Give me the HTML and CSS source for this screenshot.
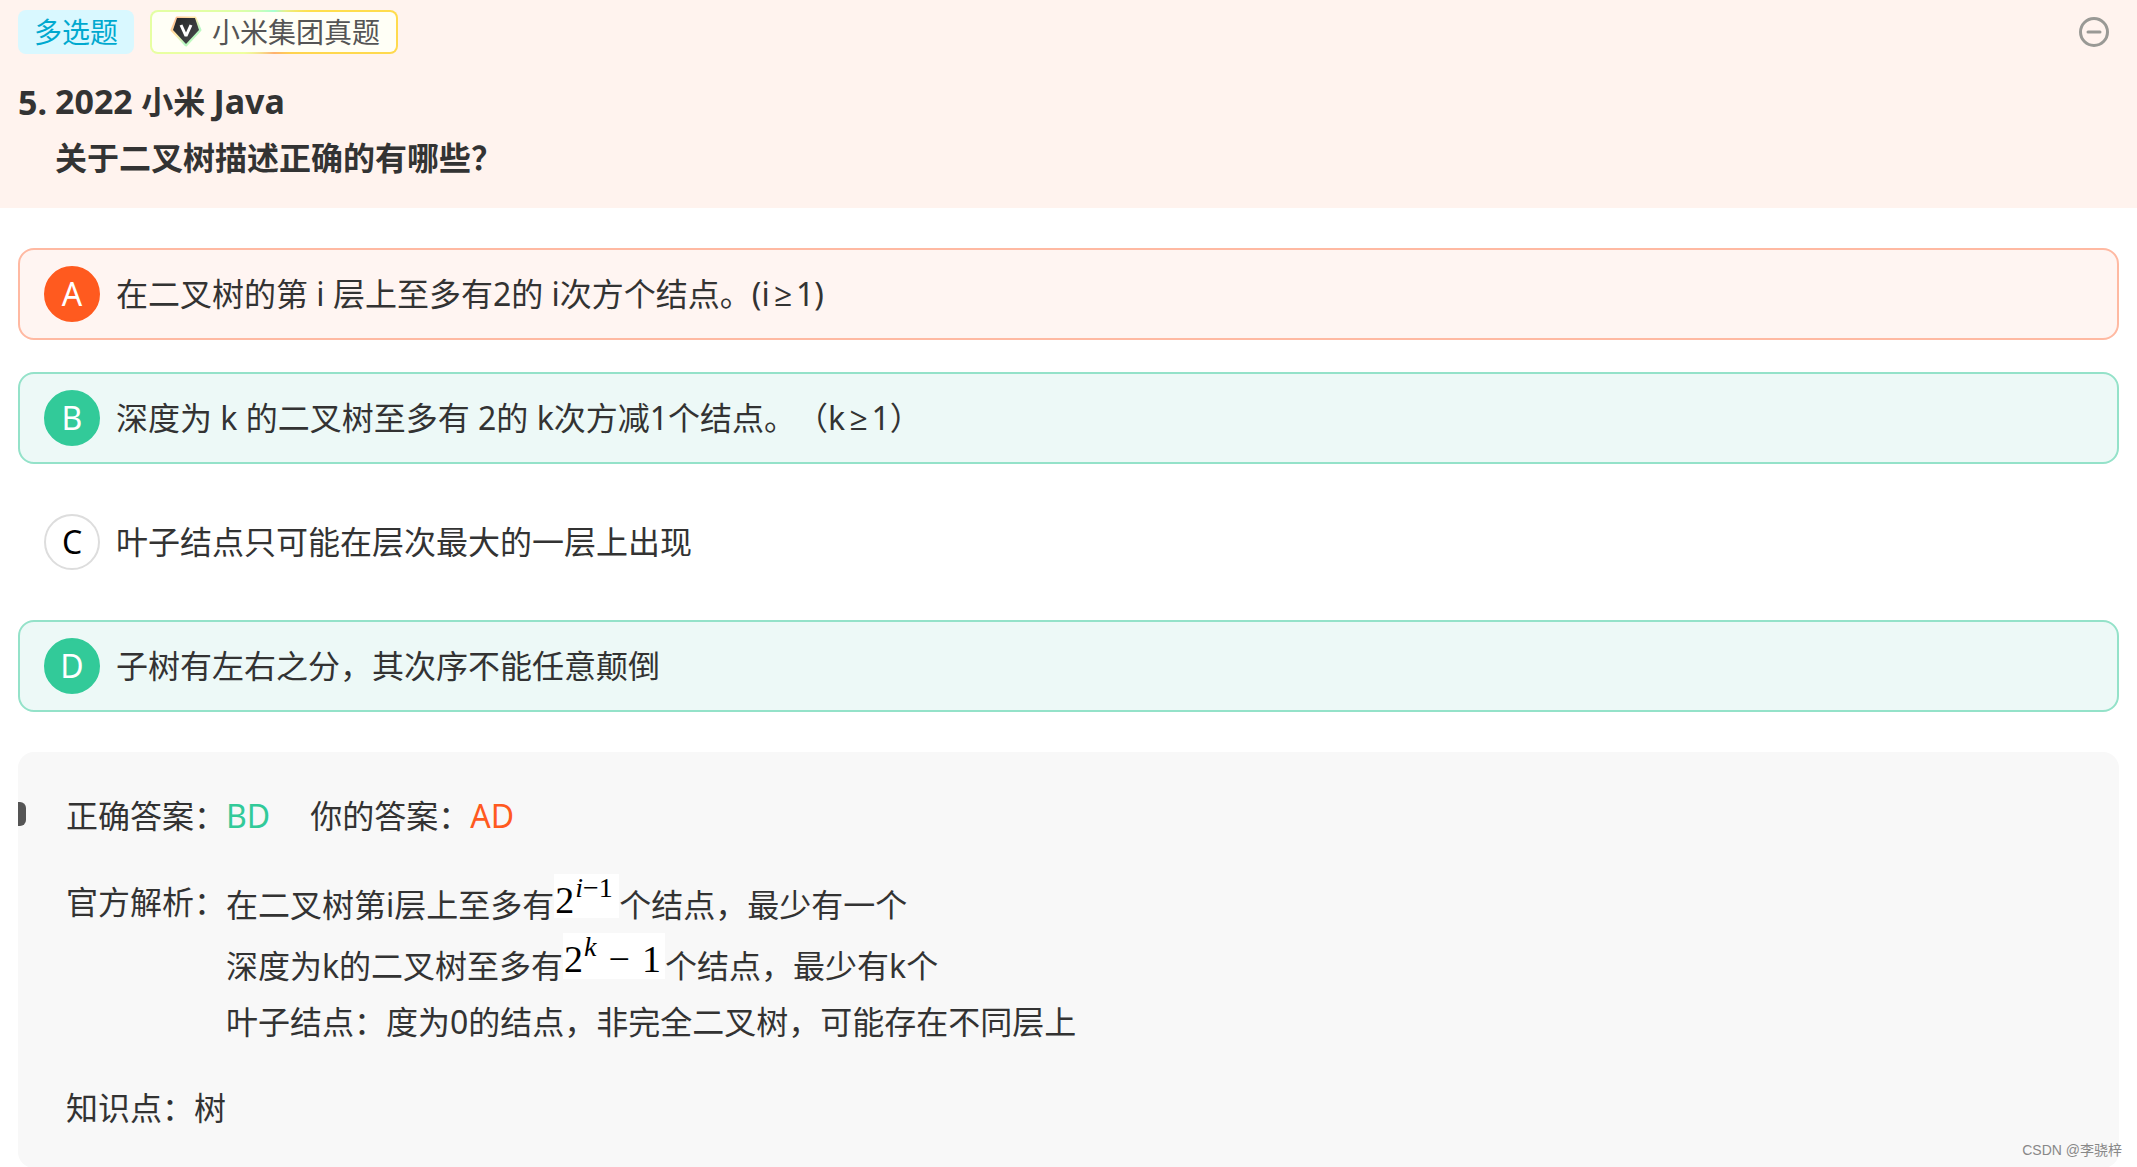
FILE: index.html
```html
<!DOCTYPE html>
<html lang="zh-CN">
<head>
  <meta charset="UTF-8" />
  <meta name="viewport" content="width=device-width, initial-scale=1.0" />
  <title>2022 小米 Java</title>
  <link rel="stylesheet" href="styles.css">
</head>
<body>
  <header class="question-header">
    <div class="tag-row">
      <span class="tag tag-type">多选题</span>
      <span class="tag tag-company">
        <svg class="gem" viewBox="0 0 32 32" aria-hidden="true">
          <defs>
            <linearGradient id="gemEdge" x1="0" y1="0" x2="1" y2="1">
              <stop offset="0" stop-color="#ffb98f" />
              <stop offset="0.4" stop-color="#ffe9a8" />
              <stop offset="0.7" stop-color="#b5f7c4" />
              <stop offset="1" stop-color="#dcffa8" />
            </linearGradient>
            <linearGradient id="gemFill" x1="0" y1="0" x2="1" y2="1">
              <stop offset="0" stop-color="#222426" />
              <stop offset="1" stop-color="#4a4c4e" />
            </linearGradient>
          </defs>
          <path d="M7 2h18l5 12-14 15L2 14z" fill="url(#gemEdge)" stroke="url(#gemEdge)" stroke-width="3" stroke-linejoin="round" />
          <path d="M7 2h18l4 12-13 14L3 14z" fill="url(#gemFill)" />
          <path d="M11 9l5 11 5-11" fill="none" stroke="#fff" stroke-width="3" stroke-linejoin="bevel" />
        </svg>
        小米集团真题
      </span>
      <button class="collapse" type="button" aria-label="收起">
        <svg viewBox="0 0 30 30" aria-hidden="true">
          <circle cx="15" cy="15" r="13.5" />
          <path d="M9 15h12" />
        </svg>
      </button>
    </div>
    <h1 class="title">
      <span class="latin">5.</span>
      <span><span class="latin">2022</span> 小米 <span class="latin">Java</span><br>关于二叉树描述正确的有哪些？</span>
    </h1>
  </header>

  <main class="content">
    <div class="options">
      <label class="option wrong">
        <input type="checkbox" name="answer" value="A" checked>
        <span class="letter">A</span>
        <span>在二叉树的第 i 层上至多有2的 i次方个结点。(i<span class="sign">≥</span>1)</span>
      </label>
      <label class="option right">
        <input type="checkbox" name="answer" value="B">
        <span class="letter">B</span>
        <span>深度为 k 的二叉树至多有 2的 k次方减1个结点。（k<span class="sign">≥</span>1）</span>
      </label>
      <label class="option">
        <input type="checkbox" name="answer" value="C">
        <span class="letter">C</span>
        <span>叶子结点只可能在层次最大的一层上出现</span>
      </label>
      <label class="option right">
        <input type="checkbox" name="answer" value="D" checked>
        <span class="letter">D</span>
        <span>子树有左右之分，其次序不能任意颠倒</span>
      </label>
    </div>

    <section class="analysis">
      <div class="row answers">
        <span>正确答案：<b class="green">BD</b></span>
        <span>你的答案：<b class="orange">AD</b></span>
      </div>
      <div class="row">
        <span>官方解析：</span>
        <div class="explain">
          <p>在二叉树第i层上至多有<span class="formula">2<sup><i>i</i>−1</sup></span>个结点，最少有一个</p>
          <p>深度为k的二叉树至多有<span class="formula formula-wide">2<sup><i>k</i></sup><span class="minus">−</span>1</span>个结点，最少有k个</p>
          <p>叶子结点：度为0的结点，非完全二叉树，可能存在不同层上</p>
        </div>
      </div>
      <div class="row">知识点：树</div>
    </section>
  </main>

  <div class="watermark">CSDN @李骁梓</div>
</body>
</html>
```

FILE: styles.css
```css
:root {
  --text: #333333;
  --green: #32ca99;
  --orange: #ff5a1f;
  --side: 18px;
}

* {
  box-sizing: border-box;
}

body {
  margin: 0;
  position: relative;
  font-family: "Noto Sans", "Noto Sans CJK SC", sans-serif;
  font-size: 32px;
  line-height: 56px;
  text-spacing-trim: space-all;
  color: var(--text);
  background: #ffffff;
}

.question-header {
  padding: 10px var(--side) 22px;
  background: #fff3ee;
}

.tag-row {
  display: flex;
  align-items: center;
  gap: 16px;
  margin-bottom: 20px;
}

.tag {
  display: flex;
  align-items: center;
  height: 44px;
  border-radius: 8px;
  font-size: 28px;
}

.tag-type {
  padding: 0 16px;
  color: #00a9cf;
  background: #d9f8ff;
}

.tag-company {
  gap: 10px;
  padding: 0 16px 0 18px;
  color: #555555;
  border: 2px solid transparent;
  background:
    linear-gradient(#fffff6, #fffff6) padding-box,
    conic-gradient(#a8ffd4, #e8f08a 30deg, #ffe04d 60deg, #ffd24f 140deg, #ffb070 180deg, #efff9f 235deg, #deffa5 300deg, #a8ffd4) border-box;
}

.gem {
  width: 32px;
  height: 32px;
}

.collapse {
  display: flex;
  width: 30px;
  height: 30px;
  margin-left: auto;
  margin-right: 10px;
  padding: 0;
  border: none;
  background: none;
  cursor: pointer;
}

.collapse svg {
  width: 100%;
  fill: none;
  stroke: #999995;
  stroke-width: 3;
  stroke-linecap: round;
}

.title {
  display: flex;
  gap: 8px;
  margin: 0;
  font-size: 32px;
  font-weight: 700;
}

.latin {
  font-size: 34px;
  line-height: 1;
}

.title > .latin {
  line-height: inherit;
}

.content {
  padding: 40px var(--side) 0;
}

.options {
  display: grid;
  gap: 32px;
  margin-bottom: 40px;
}

.option {
  display: flex;
  align-items: center;
  gap: 16px;
  padding: 16px 24px;
  border: 2px solid transparent;
  border-radius: 16px;
  cursor: pointer;
}

.option input {
  position: absolute;
  opacity: 0;
}

.letter {
  width: 56px;
  height: 56px;
  border: 2px solid #dddddd;
  border-radius: 50%;
  line-height: 52px;
  text-align: center;
  color: #000000;
}

.sign {
  margin: 0 4px;
  font-family: "Open Sans", "Liberation Sans", sans-serif;
  line-height: 1;
}

.wrong {
  background: #fff5f2;
  border-color: #ffb9a2;
}

.right {
  background: #edf9f7;
  border-color: #94e2c9;
}

.wrong .letter,
.right .letter {
  color: #ffffff;
}

.wrong .letter {
  background: var(--orange);
  border-color: var(--orange);
}

.right .letter {
  background: var(--green);
  border-color: var(--green);
}

.analysis {
  display: grid;
  gap: 30px;
  padding: 36px 48px 32px;
  border-radius: 16px;
  background: #f8f8f8;
}

.row {
  display: flex;
}

.row p {
  margin: 0;
}

.explain {
  line-height: 56px;
}

.answers {
  align-items: center;
  gap: 40px;
}

/* small handle on the left edge of the panel */
.answers::before {
  content: "";
  width: 8px;
  height: 24px;
  margin: 0 0 4px -48px;
  border-radius: 0 6px 6px 0;
  background: #555555;
}

.answers b {
  font-weight: 400;
}

.green {
  color: var(--green);
}

.orange {
  color: var(--orange);
}

.formula {
  display: inline-block;
  width: 65px;
  height: 44px;
  padding: 4px 0 0 1px;
  vertical-align: 4px;
  font-family: "Liberation Serif", serif;
  font-size: 38px;
  line-height: 44px;
  white-space: nowrap;
  color: #000000;
  background: #ffffff;
}

.formula-wide {
  width: 102px;
  height: 46px;
  vertical-align: 6px;
}

.formula sup {
  margin-left: 1px;
  font-size: 28px;
  line-height: 0;
  vertical-align: 16px;
}

.minus {
  margin: 0 12px;
}

.watermark {
  position: absolute;
  right: 15px;
  bottom: 8px;
  font-family: "Liberation Sans", "Noto Sans CJK SC", sans-serif;
  font-size: 14px;
  line-height: 20px;
  color: #888888;
}
```
